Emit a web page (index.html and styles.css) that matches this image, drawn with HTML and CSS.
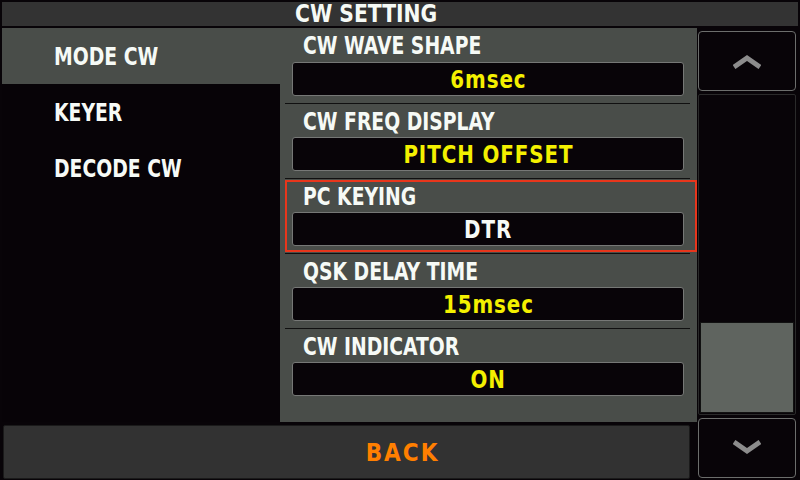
FILE: index.html
```html
<!DOCTYPE html>
<html>
<head>
<meta charset="utf-8">
<title>CW SETTING</title>
<link rel="stylesheet" href="styles.css">
</head>
<body>
<div class="screen">
  <div class="title"><span class="t">CW SETTING</span></div>
  <div class="menu">
    <div class="item selected"><span class="t">MODE CW</span></div>
    <div class="item"><span class="t">KEYER</span></div>
    <div class="item"><span class="t">DECODE CW</span></div>
  </div>
  <div class="main">
    <div class="row">
      <div class="label"><span class="t">CW WAVE SHAPE</span></div>
      <div class="value yellow"><span class="t">6msec</span></div>
    </div>
    <div class="sep"></div>
    <div class="row">
      <div class="label"><span class="t">CW FREQ DISPLAY</span></div>
      <div class="value yellow"><span class="t">PITCH OFFSET</span></div>
    </div>
    <div class="sep"></div>
    <div class="row focused">
      <div class="label"><span class="t">PC KEYING</span></div>
      <div class="value"><span class="t">DTR</span></div>
    </div>
    <div class="sep"></div>
    <div class="row">
      <div class="label"><span class="t">QSK DELAY TIME</span></div>
      <div class="value yellow"><span class="t">15msec</span></div>
    </div>
    <div class="sep"></div>
    <div class="row">
      <div class="label"><span class="t">CW INDICATOR</span></div>
      <div class="value yellow"><span class="t">ON</span></div>
    </div>
  </div>
  <div class="scroll">
    <div class="sbtn">
      <svg width="28" height="16" viewBox="0 0 28 16"><polyline points="1,14 14,5 27,14" fill="none" stroke="#8c8c8c" stroke-width="5" stroke-linejoin="miter"/></svg>
    </div>
    <div class="track"><div class="thumb"></div></div>
    <div class="sbtn">
      <svg width="28" height="16" viewBox="0 0 28 16"><polyline points="1,2 14,11 27,2" fill="none" stroke="#8c8c8c" stroke-width="5" stroke-linejoin="miter"/></svg>
    </div>
  </div>
  <div class="back"><span class="t">BACK</span></div>
</div>
</body>
</html>
```
FILE: styles.css
```css
html, body {
  margin: 0;
  padding: 0;
  background: #080408;
}
.screen {
  width: 800px;
  height: 480px;
  box-sizing: border-box;
  padding: 2px;
  background: #080408;
  display: grid;
  grid-template-columns: 278px 417px 101px;
  grid-template-rows: 24px 394px 56px;
  row-gap: 2px;
  font-family: "DejaVu Sans Condensed", "Liberation Sans", sans-serif;
  font-weight: bold;
  font-size: 24px;
  color: #f6faf6;
}
.t {
  display: inline-block;
  transform-origin: left center;
  transform: scaleX(0.87);
  white-space: nowrap;
}
.title {
  grid-column: 1 / 4;
  background: #333333;
  line-height: 25px;
  height: 24px;
  padding-left: 293px;
}
.title .t {
  transform: scaleX(0.94);
}
.menu {
  background: #070307;
}
.item {
  height: 56px;
  line-height: 58px;
  padding-left: 52px;
}
.item.selected {
  background: #494d49;
}
.main {
  background: #494d49;
}
.row {
  position: relative;
  height: 75px;
  box-sizing: border-box;
  padding-bottom: 7px;
}
.sep + .row {
  height: 74px;
}
.label {
  height: 34px;
  line-height: 37px;
  padding-left: 23px;
}
.sep + .row .label {
  height: 33px;
  line-height: 36px;
}
.value {
  height: 34px;
  box-sizing: border-box;
  margin: 0 13px 0 12px;
  border: 1px solid #767876;
  border-radius: 3px;
  background: #080408;
  text-align: center;
  line-height: 34px;
  letter-spacing: 1px;
}
.value .t {
  transform-origin: center center;
  transform: scaleX(0.92);
}
.yellow {
  color: #f4f000;
}
.sep {
  height: 1px;
  margin: 0 7px 0 5px;
  background: #101010;
}
.focused::after {
  content: "";
  position: absolute;
  left: 5px;
  right: 0;
  top: 1px;
  bottom: 1px;
  border: 2px solid #e8361c;
}
.scroll {
  grid-column: 3;
  grid-row: 2 / 4;
  display: flex;
  flex-direction: column;
  gap: 3px;
  padding: 3px 2px 2px 1px;
}
.sbtn {
  height: 60px;
  box-sizing: border-box;
  border: 1px solid #6c6e6c;
  border-radius: 4px;
  background: #080408;
  display: flex;
  align-items: center;
  justify-content: center;
}
.track {
  flex: 1;
  box-sizing: border-box;
  border: 1px solid #2a2a2a;
  border-radius: 2px;
  background: #080408;
  display: flex;
  flex-direction: column;
  justify-content: flex-end;
  padding: 1px;
}
.thumb {
  height: 89px;
  background: #5f645f;
  border: 1px solid #111;
}
.back {
  grid-column: 1 / 3;
  grid-row: 3;
  margin: 1px 7px 1px 1px;
  background: #323232;
  border: 1px solid #1a1a1a;
  border-radius: 2px;
  color: #ff7f00;
  text-align: center;
  line-height: 54px;
  padding-left: 112px;
  letter-spacing: 2px;
}
.back .t {
  transform: none;
}
```
